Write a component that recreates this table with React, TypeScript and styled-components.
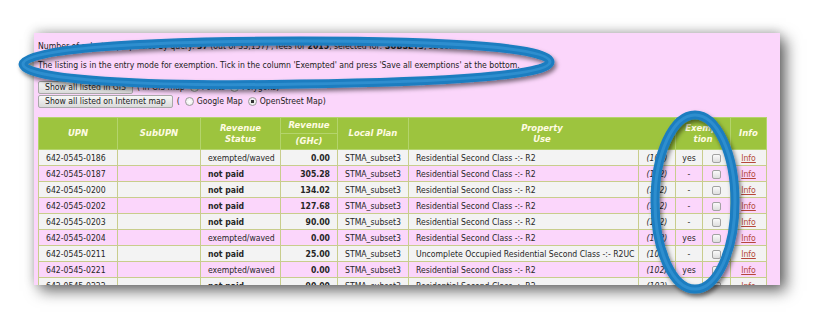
import React from "react";
import styled, { createGlobalStyle, css } from "styled-components";

const Global = createGlobalStyle`
  html, body { margin: 0; padding: 0; background: #ffffff; }
  body { font-family: "DejaVu Sans Condensed", "Liberation Sans", sans-serif; }
`;

const Stage = styled.div`
  position: relative;
  width: 814px;
  height: 320px;
  overflow: hidden;
  background: #ffffff;
  padding: 33px 0 0 34px;
  box-sizing: border-box;
`;

const Panel = styled.div`
  width: 746px;
  height: 252px;
  background: #fbd6fb;
  box-shadow: 6px 6px 14px rgba(0, 0, 0, 0.58), 0 -2px 10px rgba(0, 0, 0, 0.18);
  overflow: hidden;
  padding: 7px 0 0 4px;
  box-sizing: border-box;
  color: #222;
  font-size: 8.6px;
`;

const Line = styled.p<{ $gap?: number }>`
  margin: ${(p) => p.$gap ?? 0}px 0 0 0;
  line-height: 12px;
  white-space: nowrap;
`;

const ButtonRow = styled.div<{ $gap?: number }>`
  display: flex;
  align-items: center;
  gap: 4px;
  height: 14px;
  margin-top: ${(p) => p.$gap ?? 0}px;
  white-space: nowrap;
`;

const MapButton = styled.button`
  height: 13px;
  padding: 0 6px;
  font-family: inherit;
  font-size: 8.6px;
  line-height: 11px;
  color: #222;
  border: 1px solid #a8a8a8;
  border-radius: 2px;
  background: linear-gradient(#f8f8f8, #dadada);
`;

const RadioGroup = styled.span`
  display: inline-flex;
  align-items: center;
  gap: 3px;
`;

const Radio = styled.span<{ $on?: boolean }>`
  display: inline-block;
  width: 7px;
  height: 7px;
  border-radius: 50%;
  border: 1px solid #9a9a9a;
  background: radial-gradient(circle, ${(p) => (p.$on ? "#333 0 1.6px, #eee 2px" : "#fff 0, #e6e6e6 100%")});
  margin-left: 2px;
`;

const Table = styled.table`
  border-collapse: collapse;
  table-layout: fixed;
  width: 728px;
  margin-top: 9px;
`;

const Th = styled.th`
  background: #9dc43e;
  color: #fffbe2;
  font-family: "DejaVu Sans", "Liberation Sans", sans-serif;
  font-size: 8.5px;
  font-weight: bold;
  font-style: italic;
  line-height: 11px;
  text-align: center;
  border: 1px solid #b4d46c;
  padding: 0;
  height: 15px;
`;

const Tr = styled.tr<{ $pink?: boolean }>`
  background: ${(p) => (p.$pink ? "#fbd6fb" : "#f3f3f3")};
`;

const Td = styled.td<{ $align?: "left" | "right" | "center"; $bold?: boolean; $italic?: boolean }>`
  height: 15px;
  padding: 0 7px;
  border: 1px solid #c8cd8c;
  white-space: nowrap;
  overflow: hidden;
  text-align: ${(p) => p.$align ?? "left"};
  font-weight: ${(p) => (p.$bold ? "bold" : "normal")};
  font-style: ${(p) => (p.$italic ? "italic" : "normal")};
  color: #262626;
  line-height: 12px;
  ${(p) =>
    p.$align === "center" &&
    css`
      padding: 0;
    `}
`;

const Check = styled.span`
  display: inline-block;
  width: 7px;
  height: 7px;
  border: 1px solid #a2a2a2;
  border-radius: 2px;
  background: linear-gradient(#fafafa, #dedede);
  vertical-align: middle;
`;

const InfoLink = styled.a`
  color: #b4473b;
  text-decoration: underline;
`;

const Overlay = styled.svg`
  position: absolute;
  left: 0;
  top: 0;
  pointer-events: none;
`;

type Row = {
  upn: string;
  status: string;
  paid: boolean;
  rev: string;
  use: string;
  code: string;
  ex: string;
};

const rows: Row[] = [
  { upn: "642-0545-0186", status: "exempted/waved", paid: true, rev: "0.00", use: "Residential Second Class -:- R2", code: "(102)", ex: "yes" },
  { upn: "642-0545-0187", status: "not paid", paid: false, rev: "305.28", use: "Residential Second Class -:- R2", code: "(102)", ex: "-" },
  { upn: "642-0545-0200", status: "not paid", paid: false, rev: "134.02", use: "Residential Second Class -:- R2", code: "(102)", ex: "-" },
  { upn: "642-0545-0202", status: "not paid", paid: false, rev: "127.68", use: "Residential Second Class -:- R2", code: "(102)", ex: "-" },
  { upn: "642-0545-0203", status: "not paid", paid: false, rev: "90.00", use: "Residential Second Class -:- R2", code: "(102)", ex: "-" },
  { upn: "642-0545-0204", status: "exempted/waved", paid: true, rev: "0.00", use: "Residential Second Class -:- R2", code: "(102)", ex: "yes" },
  { upn: "642-0545-0211", status: "not paid", paid: false, rev: "25.00", use: "Uncomplete Occupied Residential Second Class -:- R2UC", code: "(103)", ex: "-" },
  { upn: "642-0545-0221", status: "exempted/waved", paid: true, rev: "0.00", use: "Residential Second Class -:- R2", code: "(102)", ex: "yes" },
  { upn: "642-0545-0222", status: "not paid", paid: false, rev: "90.00", use: "Residential Second Class -:- R2", code: "(102)", ex: "-" },
];

const widths = [79, 83, 80, 57, 71, 230, 37, 27, 28, 36];

export default function App() {
  return (
    <>
      <Global />
      <Stage>
        <Panel>
          <Line>
            Number of selected properties by query: <b>37</b> (out of 33,157) , fees for <b>2015</b>, selected for:{" "}
            <b>SUBSET3</b>, street: 10th St
          </Line>
          <Line $gap={7}>
            The listing is in the entry mode for exemption. Tick in the column 'Exempted' and press 'Save all
            exemptions' at the bottom.
          </Line>
          <ButtonRow $gap={9}>
            <MapButton>Show all listed in GIS</MapButton>
            <RadioGroup>
              ( in GIS map <Radio /> Points <Radio /> Polygons)
            </RadioGroup>
          </ButtonRow>
          <ButtonRow>
            <MapButton>Show all listed on Internet map</MapButton>
            <RadioGroup>
              ( <Radio /> Google Map <Radio $on /> OpenStreet Map)
            </RadioGroup>
          </ButtonRow>
          <Table>
            <colgroup>
              {widths.map((w, i) => (
                <col key={i} style={{ width: w }} />
              ))}
            </colgroup>
            <thead>
              <tr>
                <Th rowSpan={2}>UPN</Th>
                <Th rowSpan={2}>SubUPN</Th>
                <Th rowSpan={2}>
                  Revenue
                  <br />
                  Status
                </Th>
                <Th>Revenue</Th>
                <Th rowSpan={2}>Local Plan</Th>
                <Th rowSpan={2} colSpan={2}>
                  Property
                  <br />
                  Use
                </Th>
                <Th rowSpan={2} colSpan={2}>
                  Exemp-
                  <br />
                  tion
                </Th>
                <Th rowSpan={2}>Info</Th>
              </tr>
              <tr>
                <Th>(GHc)</Th>
              </tr>
            </thead>
            <tbody>
              {rows.map((r, i) => (
                <Tr key={r.upn} $pink={i % 2 === 1}>
                  <Td>{r.upn}</Td>
                  <Td />
                  <Td $bold={!r.paid}>{r.status}</Td>
                  <Td $align="right" $bold>
                    {r.rev}
                  </Td>
                  <Td>STMA_subset3</Td>
                  <Td>{r.use}</Td>
                  <Td $align="center" $italic>
                    {r.code}
                  </Td>
                  <Td $align="center">{r.ex}</Td>
                  <Td $align="center">
                    <Check />
                  </Td>
                  <Td $align="center">
                    <InfoLink href="#">Info</InfoLink>
                  </Td>
                </Tr>
              ))}
            </tbody>
          </Table>
        </Panel>
        <Overlay width="814" height="320" viewBox="0 0 814 320">
          <defs>
            <filter id="mk" x="-10%" y="-30%" width="120%" height="160%">
              <feDropShadow dx="2" dy="3" stdDeviation="2" floodColor="#000" floodOpacity="0.5" />
            </filter>
          </defs>
          <g filter="url(#mk)" fill="none" stroke="#1b7dc0" strokeWidth="9">
            <path d="M 23 64 C 23 49, 140 41, 300 41 C 455 41, 550 48, 550 62 C 550 75, 450 82, 300 84 C 150 87, 23 80, 23 64 Z" />
            <ellipse cx="695" cy="202" rx="40" ry="87" />
          </g>
          <g fill="none" stroke="#3a9ad8" strokeWidth="3" opacity="0.6">
            <path d="M 23 64 C 23 49, 140 41, 300 41 C 455 41, 550 48, 550 62 C 550 75, 450 82, 300 84 C 150 87, 23 80, 23 64 Z" />
            <ellipse cx="695" cy="202" rx="40" ry="87" />
          </g>
        </Overlay>
      </Stage>
    </>
  );
}
